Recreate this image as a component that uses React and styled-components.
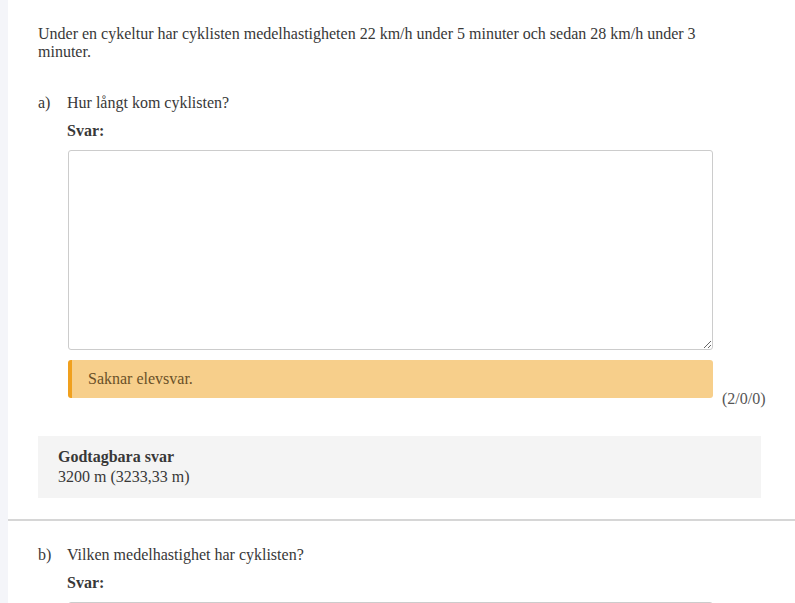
import React from 'react'
import styled, { createGlobalStyle } from 'styled-components'

const GlobalStyle = createGlobalStyle`
  html, body {
    margin: 0;
    padding: 0;
    background: #ffffff;
  }
  body {
    font-family: "Liberation Serif", "Times New Roman", serif;
    font-size: 16px;
    line-height: 18px;
    color: #383838;
  }
`

const Page = styled.div`
  display: flex;
  min-height: 603px;
  overflow: hidden;
`

const SideStrip = styled.div`
  flex: 0 0 8px;
  background: #f4f5f9;
`

const Main = styled.div`
  flex: 1;
  min-width: 0;
`

const Section = styled.section`
  padding: ${props => props.top}px 34px 21px 30px;
`

const Intro = styled.p`
  margin: 0 0 33px;
  max-width: 674px;
`

const QuestionRow = styled.div`
  display: flex;
`

const Label = styled.div`
  flex: 0 0 29px;
`

const QuestionBody = styled.div`
  flex: 1;
  min-width: 0;
`

const Prompt = styled.div`
  margin-bottom: 10px;
`

const AnswerLabel = styled.div`
  font-weight: bold;
  margin-bottom: 10px;
`

const AnswerBox = styled.textarea`
  display: block;
  box-sizing: border-box;
  width: 645px;
  margin-left: 1px;
  height: 200px;
  border: 1px solid #cccccc;
  border-radius: 3px;
  resize: vertical;
  font: inherit;
  padding: 6px 10px;
`

const FeedbackLine = styled.div`
  display: flex;
  align-items: flex-start;
  margin-top: 10px;
`

const Feedback = styled.div`
  flex: 0 0 645px;
  margin-left: 1px;
  height: 38px;
  box-sizing: border-box;
  display: flex;
  align-items: center;
  padding-left: 16px;
  background: #f7cf8b;
  border-left: 4px solid #f0a01e;
  border-radius: 3px;
  color: #6a5128;
`

const Points = styled.div`
  margin: 30px 0 0 9px;
  color: #555555;
  white-space: nowrap;
`

const Accepted = styled.div`
  margin-top: 28px;
  background: #f4f4f4;
  padding: 11px 20px;
  line-height: 20px;
`

const AcceptedTitle = styled.div`
  font-weight: bold;
`

const Divider = styled.hr`
  margin: 0;
  border: 0;
  height: 2px;
  background: #d6d6d6;
`

function Question({ label, prompt, missing, points }) {
  return (
    <QuestionRow>
      <Label>{label}</Label>
      <QuestionBody>
        <Prompt>{prompt}</Prompt>
        <AnswerLabel>Svar:</AnswerLabel>
        <AnswerBox />
        {missing && (
          <FeedbackLine>
            <Feedback>Saknar elevsvar.</Feedback>
            <Points>{points}</Points>
          </FeedbackLine>
        )}
      </QuestionBody>
    </QuestionRow>
  )
}

export default function App() {
  return (
    <>
      <GlobalStyle />
      <Page>
        <SideStrip />
        <Main>
          <Section top={25}>
            <Intro>
              Under en cykeltur har cyklisten medelhastigheten 22 km/h under 5 minuter och sedan 28 km/h under 3 minuter.
            </Intro>
            <Question
              label="a)"
              prompt="Hur långt kom cyklisten?"
              missing
              points="(2/0/0)"
            />
            <Accepted>
              <AcceptedTitle>Godtagbara svar</AcceptedTitle>
              <div>3200 m (3233,33 m)</div>
            </Accepted>
          </Section>
          <Divider />
          <Section top={25}>
            <Question label="b)" prompt="Vilken medelhastighet har cyklisten?" />
          </Section>
        </Main>
      </Page>
    </>
  )
}
